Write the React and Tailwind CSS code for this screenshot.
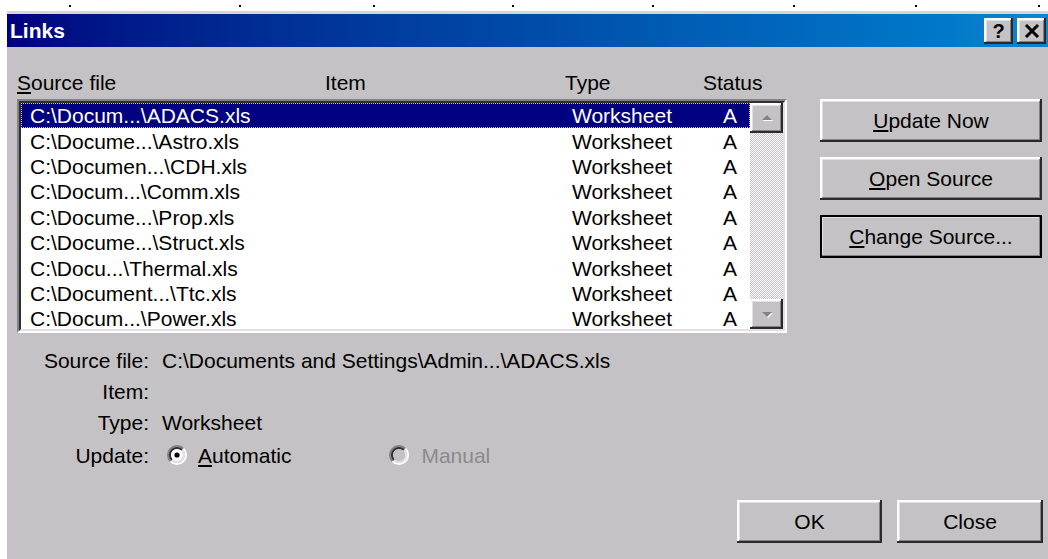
import React from "react";

const ticks = [69, 239, 373, 512, 652, 793, 915, 1038];

const links = [
  "C:\\Docum...\\ADACS.xls",
  "C:\\Docume...\\Astro.xls",
  "C:\\Documen...\\CDH.xls",
  "C:\\Docum...\\Comm.xls",
  "C:\\Docume...\\Prop.xls",
  "C:\\Docume...\\Struct.xls",
  "C:\\Docu...\\Thermal.xls",
  "C:\\Document...\\Ttc.xls",
  "C:\\Docum...\\Power.xls",
];

// classic raised 3D edge
const raised =
  "bg-[#c4c2c4] shadow-[inset_-2px_-2px_#2a2a2a,inset_2px_2px_#ffffff,inset_-3px_-3px_#848284,inset_3px_3px_#e2e0e2]";

function Button({ children, className = "", isDefault = false }) {
  return (
    <button
      className={`${raised} h-[43px] flex items-center justify-center text-[21px] leading-none ${
        isDefault ? "outline-2 outline-black -outline-offset-2" : ""
      } ${className}`}
    >
      {children}
    </button>
  );
}

function Radio({ checked, disabled }) {
  return (
    <svg width="22" height="22" viewBox="0 0 22 22">
      <path d="M4.6 17.4 A9 9 0 0 1 17.4 4.6" stroke="#848284" strokeWidth="2" fill="none" />
      <path d="M17.4 4.6 A9 9 0 0 1 4.6 17.4" stroke="#ffffff" strokeWidth="2" fill="none" />
      <path d="M6 16 A7 7 0 0 1 16 6" stroke="#303030" strokeWidth="2" fill="none" />
      <path d="M16 6 A7 7 0 0 1 6 16" stroke="#e2e0e2" strokeWidth="2" fill="none" />
      <circle cx="11" cy="11" r="6" fill={disabled ? "#c4c2c4" : "#ffffff"} />
      {checked && <circle cx="11" cy="11" r="2.6" fill="#000000" />}
    </svg>
  );
}

function ScrollArrow({ down }) {
  return (
    <div className={`${raised} h-[30px] flex items-center justify-center`}>
      <svg width="16" height="10" viewBox="0 0 16 10">
        {down ? (
          <>
            <path d="M3 3 H13 L8 8 Z" fill="#ffffff" transform="translate(1 1)" />
            <path d="M3 3 H13 L8 8 Z" fill="#848284" />
          </>
        ) : (
          <>
            <path d="M3 7 H13 L8 2 Z" fill="#ffffff" transform="translate(1 1)" />
            <path d="M3 7 H13 L8 2 Z" fill="#848284" />
          </>
        )}
      </svg>
    </div>
  );
}

function TitleBar() {
  return (
    <div className="h-[33px] flex items-center justify-between pl-[3px] pr-[2px] bg-gradient-to-r from-[#000080] to-[#1084d0]">
      <span className="text-white font-bold text-[21px] leading-none">Links</span>
      <div className="flex gap-[4px]">
        <div className={`${raised} w-[29px] h-[26px] flex items-center justify-center font-bold text-[20px] leading-none`}>?</div>
        <div className={`${raised} w-[29px] h-[26px] flex items-center justify-center`}>
          <svg width="16" height="14" viewBox="0 0 16 14">
            <path d="M2 1 L14 13 M14 1 L2 13" stroke="#000" strokeWidth="3" />
          </svg>
        </div>
      </div>
    </div>
  );
}

export default function App() {
  return (
    <div className="relative w-[1048px] h-[559px] overflow-hidden bg-white text-black font-['Liberation_Sans',Arial,sans-serif] text-[21px]">
      {/* ruler ticks above the window */}
      <div className="relative h-[11px]">
        {ticks.map((x) => (
          <span key={x} className="absolute top-[5px] w-[2px] h-[2px] bg-black" style={{ left: x }} />
        ))}
      </div>

      <div className="flex h-[548px]">
        <div className="w-[7px] bg-white" />
        <div className="flex-1 flex flex-col border-t-[3px] border-[#d6d6d6] bg-[#c4c2c4]">
          <TitleBar />

          <div className="flex flex-col pl-[10px] pr-[5px] pt-[24px]">
            <div className="flex justify-between">
              {/* links list */}
              <div className="w-[770px]">
                <div className="flex h-[28px] leading-[24px]">
                  <span className="w-[308px]">
                    <u>S</u>ource file
                  </span>
                  <span className="w-[240px]">Item</span>
                  <span className="w-[138px]">Type</span>
                  <span>Status</span>
                </div>
                <div className="h-[234px] flex border-2 border-t-[#848284] border-l-[#848284] border-b-white border-r-white">
                  <div className="flex-1 flex border-2 border-t-[#303030] border-l-[#303030] border-b-[#e2e0e2] border-r-[#e2e0e2] bg-white">
                    <div className="flex-1 p-[0px]">
                      {links.map((file, i) => (
                        <div
                          key={file}
                          className={`flex items-center h-[25.4px] pl-[9px] leading-none ${
                            i === 0
                              ? "bg-[#000080] text-white outline-1 outline-dotted outline-[#c8c8c8] -outline-offset-1"
                              : ""
                          }`}
                        >
                          <span className="w-[542px] whitespace-nowrap">{file}</span>
                          <span className="w-[151px]">Worksheet</span>
                          <span>A</span>
                        </div>
                      ))}
                    </div>
                    <div className="w-[33px] flex flex-col">
                      <ScrollArrow />
                      <div className="flex-1 bg-[repeating-conic-gradient(#ffffff_0_25%,#c4c2c4_0_50%)] bg-[length:2px_2px]" />
                      <ScrollArrow down />
                    </div>
                  </div>
                </div>
              </div>

              {/* action buttons */}
              <div className="w-[222px] mr-[1px] pt-[28px] flex flex-col gap-[15px]">
                <Button>
                  <span>
                    <u>U</u>pdate Now
                  </span>
                </Button>
                <Button>
                  <span>
                    <u>O</u>pen Source
                  </span>
                </Button>
                <Button isDefault>
                  <span>
                    <u>C</u>hange Source...
                  </span>
                </Button>
              </div>
            </div>

            {/* details of the selected link */}
            <div className="mt-[12px] grid grid-cols-[132px_1fr] gap-x-[13px] leading-none">
              <span className="h-[31px] flex items-center justify-end">Source file:</span>
              <span className="h-[31px] flex items-center">C:\Documents and Settings\Admin...\ADACS.xls</span>
              <span className="h-[31px] flex items-center justify-end">Item:</span>
              <span className="h-[31px]" />
              <span className="h-[31px] flex items-center justify-end">Type:</span>
              <span className="h-[31px] flex items-center">Worksheet</span>
              <span className="h-[34px] flex items-center justify-end">Update:</span>
              <div className="h-[34px] flex items-center">
                <span className="ml-[4px] flex items-center">
                  <Radio checked />
                </span>
                <span className="ml-[10px]">
                  <u>A</u>utomatic
                </span>
                <span className="ml-[97px] flex items-center">
                  <Radio disabled />
                </span>
                <span className="ml-[11px] text-[#8c8a8c]">Manual</span>
              </div>
            </div>

            <div className="mt-[28px] flex justify-end gap-[15px]">
              <Button className="w-[145px] h-[41px]">OK</Button>
              <Button className="w-[146px] h-[41px]">Close</Button>
            </div>
          </div>
        </div>
      </div>
    </div>
  );
}
